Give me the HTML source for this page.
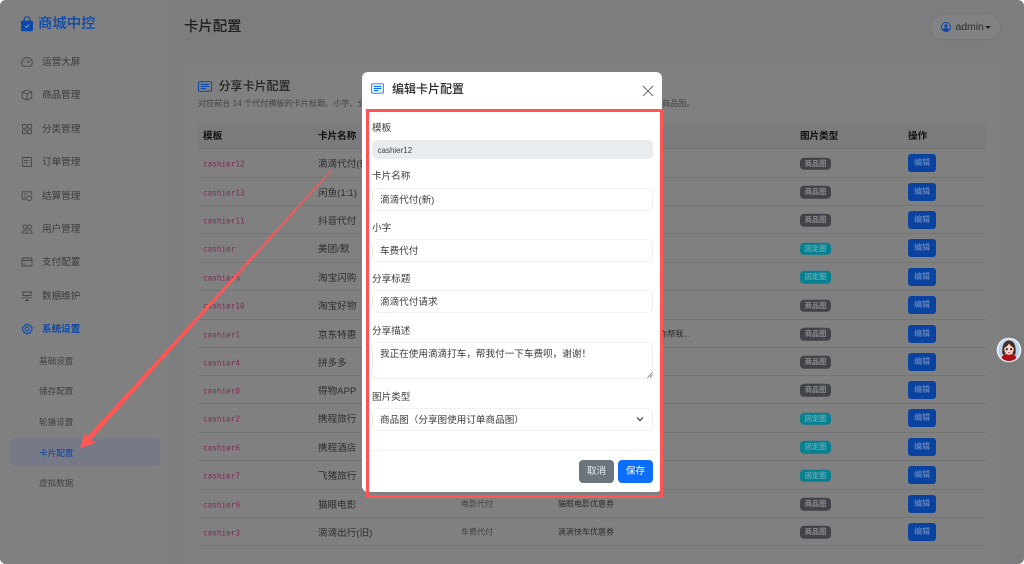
<!DOCTYPE html>
<html lang="zh-CN">
<head>
<meta charset="utf-8">
<title>卡片配置</title>
<style>
*{box-sizing:border-box}
html,body{margin:0;padding:0;width:1024px;height:564px;overflow:hidden;background:#fff}
body{font-family:"Liberation Sans","Noto Sans CJK SC",sans-serif;color:#2a2b2c}
#page{position:absolute;left:0;top:0;width:1024px;height:564px;overflow:hidden;background:#7c7d7e;border-radius:6px;}
#bg{position:absolute;left:0;top:0;width:1024px;height:564px;filter:blur(.35px)}
.a{position:absolute;white-space:nowrap}
#side{position:absolute;left:0;top:0;width:169px;height:564px;background:#808080}
#card{position:absolute;left:184px;top:64px;width:816px;height:520px;background:#808080;border-radius:6px}
.m{position:absolute;left:42px;font-size:9.6px;line-height:14px;color:#3a3b3c;white-space:nowrap}
.s{position:absolute;left:39px;font-size:8.6px;line-height:12px;color:#3f4041;white-space:nowrap}
.i{position:absolute;left:21px;width:12px;height:12px;fill:none;stroke:#454648;stroke-width:.9}
.r{position:absolute;left:198px;width:788px;border-bottom:1px solid #737475}
.r>*{position:absolute;top:50%;transform:translateY(-50%);white-space:nowrap}
.c{left:5px;font-family:"DejaVu Sans Mono","Liberation Mono",monospace;font-size:7.68px;color:#7c2b56;margin-top:1px}
.n{left:120px;font-size:9.6px;color:#2b2c2d}
.t{left:263px;font-size:8px;color:#3f4041}
.x{left:360px;font-size:8px;color:#2b2c2d}
.b{left:602px;width:31px;height:12.5px;line-height:12.5px;border-radius:4px;text-align:center;font-size:7.2px;font-weight:700;margin-top:.5px}
.g{background:#404348;color:#8a8b8c}
.k{background:#07808f;color:#5aa6b5}
.e{left:710px;width:28px;height:18px;line-height:18px;border-radius:3px;text-align:center;font-size:8px;background:#0a439f;color:#7a96c6}
#modal{position:absolute;left:362px;top:72px;width:300px;height:420px;background:#fff;border-radius:6px;filter:blur(.3px)}
#modal .l{position:absolute;left:10px;font-size:9.6px;line-height:14px;color:#3a3b3c;white-space:nowrap}
#modal .f{position:absolute;left:10px;width:281px;border:1px solid #eef0f2;border-radius:5px;font-size:9.6px;color:#3a3b3c;padding-left:7px;white-space:nowrap;background:#fff}
</style>
</head>
<body>
<div id="page">
<div id="bg">
<div id="side">
  <svg class="a" style="left:20px;top:16px" width="14" height="16" viewBox="0 0 14 16"><path d="M4.2 5V3.600a2.800 2.800 0 0 1 5.600 0V5" fill="none" stroke="#0b48a8" stroke-width="1.200"/><rect x="1" y="4.600" width="12" height="10.600" rx="1.200" fill="#0b48a8"/><path d="M4.800 9.800l1.600 1.600 2.800-2.800" fill="none" stroke="#8fa8d0" stroke-width=".9"/></svg>
  <div class="a" style="left:38px;top:14px;font-size:14.4px;line-height:20px;font-weight:500;color:#0b48a8">商城中控</div>

  <svg class="i" style="top:56px" viewBox="0 0 12 12"><path d="M2 10.200a5.300 5.300 0 1 1 8 0z"/><path d="M6 7l2-2.600M2.600 6h1M8.600 6h.8M6 3v.8"/></svg>
  <div class="m" style="top:56px">运营大屏</div>
  <svg class="i" style="top:89px" viewBox="0 0 12 12"><path d="M6 1l4.800 2v6L6 11 1.200 9V3z"/><path d="M1.200 3L6 5l4.800-2M6 5v6"/></svg>
  <div class="m" style="top:89px">商品管理</div>
  <svg class="i" style="top:123px" viewBox="0 0 12 12"><rect x="1.500" y="1.500" width="3.800" height="3.800" rx=".6"/><rect x="6.900" y="1.500" width="3.800" height="3.800" rx=".6"/><rect x="1.500" y="6.900" width="3.800" height="3.800" rx=".6"/><rect x="6.900" y="6.900" width="3.800" height="3.800" rx=".6"/></svg>
  <div class="m" style="top:123px">分类管理</div>
  <svg class="i" style="top:156px" viewBox="0 0 12 12"><rect x="1.500" y="1.500" width="9" height="9" rx=".8"/><path d="M3.200 4.500h3.800M8.200 4.500h.8M3.200 6.800h3.800M8.200 6.800h.8"/></svg>
  <div class="m" style="top:156px">订单管理</div>
  <svg class="i" style="top:190px" viewBox="0 0 12 12"><path d="M5 9H1.200V1.800h9.600V5"/><circle cx="8.300" cy="8.200" r="2.500"/><path d="M3 4h2.500M3 6l1.200 1"/></svg>
  <div class="m" style="top:190px">结算管理</div>
  <svg class="i" style="top:223px" viewBox="0 0 12 12"><circle cx="3.900" cy="4" r="2"/><circle cx="8.400" cy="4" r="2"/><path d="M1 10.200c0-4 5.600-4 5.800 0zM7.800 7c2.300-.2 3.500 1.200 3.500 3.200H8.500"/></svg>
  <div class="m" style="top:223px">用户管理</div>
  <svg class="i" style="top:256px" viewBox="0 0 12 12"><rect x="1" y="2" width="10" height="8" rx=".8"/><path d="M1 4.500h10" stroke-width="1.300"/><path d="M2.500 8h2"/></svg>
  <div class="m" style="top:256px">支付配置</div>
  <svg class="i" style="top:290px" viewBox="0 0 12 12"><path d="M1 2h10M2 2v3.500h8V2M6 5.500v5M4 10.500h4M1 7.800h3.500M7.500 7.800H11"/></svg>
  <div class="m" style="top:290px">数据维护</div>
  <svg class="i" style="top:323px;stroke:#0b48a8;stroke-width:1" viewBox="0 0 12 12"><circle cx="6" cy="6" r="1.900"/><path d="M6 .9l1.200 1.300 1.700-.3.500 1.700 1.700.5-.3 1.700L11.100 7l-1.300 1-.4 1.700-1.700-.1L6 11.100l-1.200-1.500-1.700.1-.4-1.700L1.400 7l.3-1.200-.3-1.100 1.700-1.100.5-1.700 1.700.3z"/></svg>
  <div class="m" style="top:323px;color:#0b48a8;font-weight:700">系统设置</div>

  <div class="s" style="top:355px">基础设置</div>
  <div class="s" style="top:385px">储存配置</div>
  <div class="s" style="top:416px">轮播设置</div>
  <div class="a" style="left:10px;top:438px;width:150px;height:28px;background:#767a88;border-radius:5px"></div>
  <div class="s" style="top:447px;color:#0b3f9e">卡片配置</div>
  <div class="s" style="top:477px">虚拟数据</div>
</div>

<div class="a" style="left:184px;top:17px;font-size:14.4px;line-height:20px;font-weight:500;color:#1f2021">卡片配置</div>
<div class="a" style="left:931px;top:15px;width:69px;height:24px;border-radius:12px;background:#818283;box-shadow:0 0 2px #747576"></div>
<svg class="a" style="left:941px;top:22px" width="10" height="10" viewBox="0 0 10 10"><circle cx="5" cy="5" r="4.500" fill="none" stroke="#0b48a8"/><circle cx="5" cy="3.900" r="1.700" fill="#0b48a8"/><path d="M1.800 8c.8-2.600 5.600-2.600 6.400 0a4.500 4.500 0 0 1-6.400 0z" fill="#0b48a8"/></svg>
<div class="a" style="left:955.500px;top:21px;font-size:10.400px;line-height:14px;color:#2b2c2d">admin</div>
<div class="a" style="left:985px;top:26px;width:0;height:0;border-left:3px solid transparent;border-right:3px solid transparent;border-top:3.500px solid #222"></div>

<div id="card"></div>
<svg class="a" style="left:198px;top:81px" width="14" height="11" viewBox="0 0 14 11"><rect x=".5" y=".8" width="13" height="9.400" rx="1" fill="none" stroke="#0b48a8"/><path d="M2.800 3.500h8.400M2.800 5.500h8.400M2.800 7.500h5" stroke="#0b48a8" stroke-width=".9"/></svg>
<div class="a" style="left:218.500px;top:77px;font-size:12px;line-height:18px;font-weight:500;color:#232425">分享卡片配置</div>
<div class="a" style="left:198px;top:98px;font-size:8.150px;line-height:12px;color:#434445">对应前台 14 个代付模板的卡片标题、小字、分享描述与图片类型，图片可选固定图或订单商品图。</div>
<div class="a" style="left:662px;top:98px;font-size:8.150px;line-height:12px;color:#434445">商品图。</div>

<div class="a" style="left:198px;top:125px;width:788px;height:24px;background:#7a7b7c;border-bottom:1px solid #737475"></div>
<div class="a" style="left:203px;top:130px;font-size:9.600px;line-height:14px;font-weight:700;color:#101010">模板</div>
<div class="a" style="left:318px;top:130px;font-size:9.600px;line-height:14px;font-weight:700;color:#101010">卡片名称</div>
<div class="a" style="left:800px;top:130px;font-size:9.600px;line-height:14px;font-weight:700;color:#101010">图片类型</div>
<div class="a" style="left:908px;top:130px;font-size:9.600px;line-height:14px;font-weight:700;color:#101010">操作</div>

<div class="r" style="top:149px;height:29px"><span class="c">cashier12</span><span class="n">滴滴代付(新)</span><span class="b g">商品图</span><span class="e">编辑</span></div>
<div class="r" style="top:178px;height:28px"><span class="c">cashier13</span><span class="n">闲鱼(1:1)</span><span class="b g">商品图</span><span class="e">编辑</span></div>
<div class="r" style="top:206px;height:28px"><span class="c">cashier11</span><span class="n">抖音代付</span><span class="b g">商品图</span><span class="e">编辑</span></div>
<div class="r" style="top:234px;height:29px"><span class="c">cashier</span><span class="n">美团/默</span><span class="b k">固定图</span><span class="e">编辑</span></div>
<div class="r" style="top:263px;height:28px"><span class="c">cashier5</span><span class="n">淘宝闪购</span><span class="b k">固定图</span><span class="e">编辑</span></div>
<div class="r" style="top:291px;height:29px"><span class="c">cashier10</span><span class="n">淘宝好物</span><span class="b g">商品图</span><span class="e">编辑</span></div>
<div class="r" style="top:320px;height:28px"><span class="c">cashier1</span><span class="n">京东特惠</span><span style="right:296px;font-size:8px;color:#2b2c2d">你帮我...</span><span class="b g">商品图</span><span class="e">编辑</span></div>
<div class="r" style="top:348px;height:28px"><span class="c">cashier4</span><span class="n">拼多多</span><span class="b g">商品图</span><span class="e">编辑</span></div>
<div class="r" style="top:376px;height:28px"><span class="c">cashier8</span><span class="n">得物APP</span><span class="b g">商品图</span><span class="e">编辑</span></div>
<div class="r" style="top:404px;height:29px"><span class="c">cashier2</span><span class="n">携程旅行</span><span class="b k">固定图</span><span class="e">编辑</span></div>
<div class="r" style="top:433px;height:28px"><span class="c">cashier6</span><span class="n">携程酒店</span><span class="b k">固定图</span><span class="e">编辑</span></div>
<div class="r" style="top:461px;height:29px"><span class="c">cashier7</span><span class="n">飞猪旅行</span><span class="b k">固定图</span><span class="e">编辑</span></div>
<div class="r" style="top:490px;height:28px"><span class="c">cashier9</span><span class="n">猫眼电影</span><span class="t">电影代付</span><span class="x">猫眼电影优惠券</span><span class="b g">商品图</span><span class="e">编辑</span></div>
<div class="r" style="top:518px;height:28px"><span class="c">cashier3</span><span class="n">滴滴出行(旧)</span><span class="t">车费代付</span><span class="x">滴滴快车优惠券</span><span class="b g">商品图</span><span class="e">编辑</span></div>
</div>

<svg class="a" style="left:996px;top:337px" width="26" height="26" viewBox="0 0 26 26"><circle cx="13" cy="13" r="12.300" fill="#f0f2f5"/><circle cx="13" cy="13" r="10.800" fill="#b8d4ef"/><path d="M5.500 21c1-3 3.500-4 7.500-4s6.500 1 7.500 4a11 11 0 0 1-15 0z" fill="#b00c14"/><path d="M6.500 17C5.500 8 8.500 3.500 13 3.500S20.500 8 19.500 17c-1 1-2.500 1-3 0V11h-7v6c-.5 1-2 1-3 0z" fill="#4a2a22"/><ellipse cx="13" cy="12" rx="4.800" ry="5.800" fill="#f5d3c4"/><path d="M8 11c2.500-1 4-3 5-4.500 1 2 3.500 3.500 5 4.500 0-5-2.500-6-5-6s-5 1-5 6z" fill="#4a2a22"/><circle cx="10.800" cy="12.200" r="1.100" fill="#222"/><circle cx="15.200" cy="12.200" r="1.100" fill="#222"/><path d="M12 15.500h2" stroke="#c33" stroke-width=".8"/></svg>

<svg class="a" style="left:0;top:0" width="1024" height="564" viewBox="0 0 1024 564"><polygon points="331,169.800 331.900,170.500 91,439.800 96,442.500 80,448.500 85,432.500 87.500,436.300" fill="#ff5555"/></svg>

<div id="modal">
  <svg class="a" style="left:9px;top:11px" width="13" height="11" viewBox="0 0 13 11"><rect x=".5" y=".8" width="12" height="9.400" rx="1.200" fill="#e4efff" stroke="#3d8bfd"/><path d="M2.800 3.500h7.400M2.800 5.500h7.400M2.800 7.500h4.500" stroke="#0d6efd" stroke-width=".9"/></svg>
  <div class="a" style="left:30px;top:8px;font-size:12px;line-height:18px;font-weight:500;color:#2a2b2c">编辑卡片配置</div>
  <svg class="a" style="left:280px;top:13px" width="12" height="12" viewBox="0 0 12 12"><path d="M1 1l10 10M11 1L1 11" stroke="#6b6d70" stroke-width="1"/></svg>

  <div class="l" style="top:50px">模板</div>
  <div class="f" style="top:68px;height:19px;line-height:19px;background:#e9ecef;border-color:#e9ecef;font-size:8px;padding-left:4.500px;color:#3f4347">cashier12</div>
  <div class="l" style="top:98px">卡片名称</div>
  <div class="f" style="top:116px;height:23px;line-height:23px">滴滴代付(新)</div>
  <div class="l" style="top:150px">小字</div>
  <div class="f" style="top:167px;height:23px;line-height:23px">车费代付</div>
  <div class="l" style="top:201px">分享标题</div>
  <div class="f" style="top:218px;height:23px;line-height:23px">滴滴代付请求</div>
  <div class="l" style="top:253px">分享描述</div>
  <div class="f" style="top:270px;height:37px;line-height:23px">我正在使用滴滴打车，帮我付一下车费呗，谢谢！</div>
  <svg class="a" style="left:285px;top:300px" width="6" height="6" viewBox="0 0 6 6"><path d="M.5 5.500l5-5M3 5.500l2.500-2.500" stroke="#555" stroke-width=".7"/></svg>
  <div class="l" style="top:319px">图片类型</div>
  <div class="f" style="top:336px;height:23px;line-height:23px">商品图（分享图使用订单商品图）</div>
  <svg class="a" style="left:274px;top:344px" width="8" height="6" viewBox="0 0 8 6"><path d="M1 1.500l3 3 3-3" fill="none" stroke="#343a40" stroke-width="1.200"/></svg>
  <div class="a" style="left:0;top:378px;width:300px;height:1px;background:#f2f3f4"></div>
  <div class="a" style="left:217px;top:388px;width:35px;height:23px;line-height:24px;border-radius:4px;background:#6c757d;color:#e8eaec;font-size:9.600px;text-align:center">取消</div>
  <div class="a" style="left:256px;top:388px;width:35px;height:23px;line-height:24px;border-radius:4px;background:#0d6efd;color:#fff;font-size:9.600px;text-align:center">保存</div>
</div>

<div class="a" style="left:366px;top:108.500px;width:297px;height:389.500px;border:3px solid #ff5555"></div>
</div>
</body>
</html>
